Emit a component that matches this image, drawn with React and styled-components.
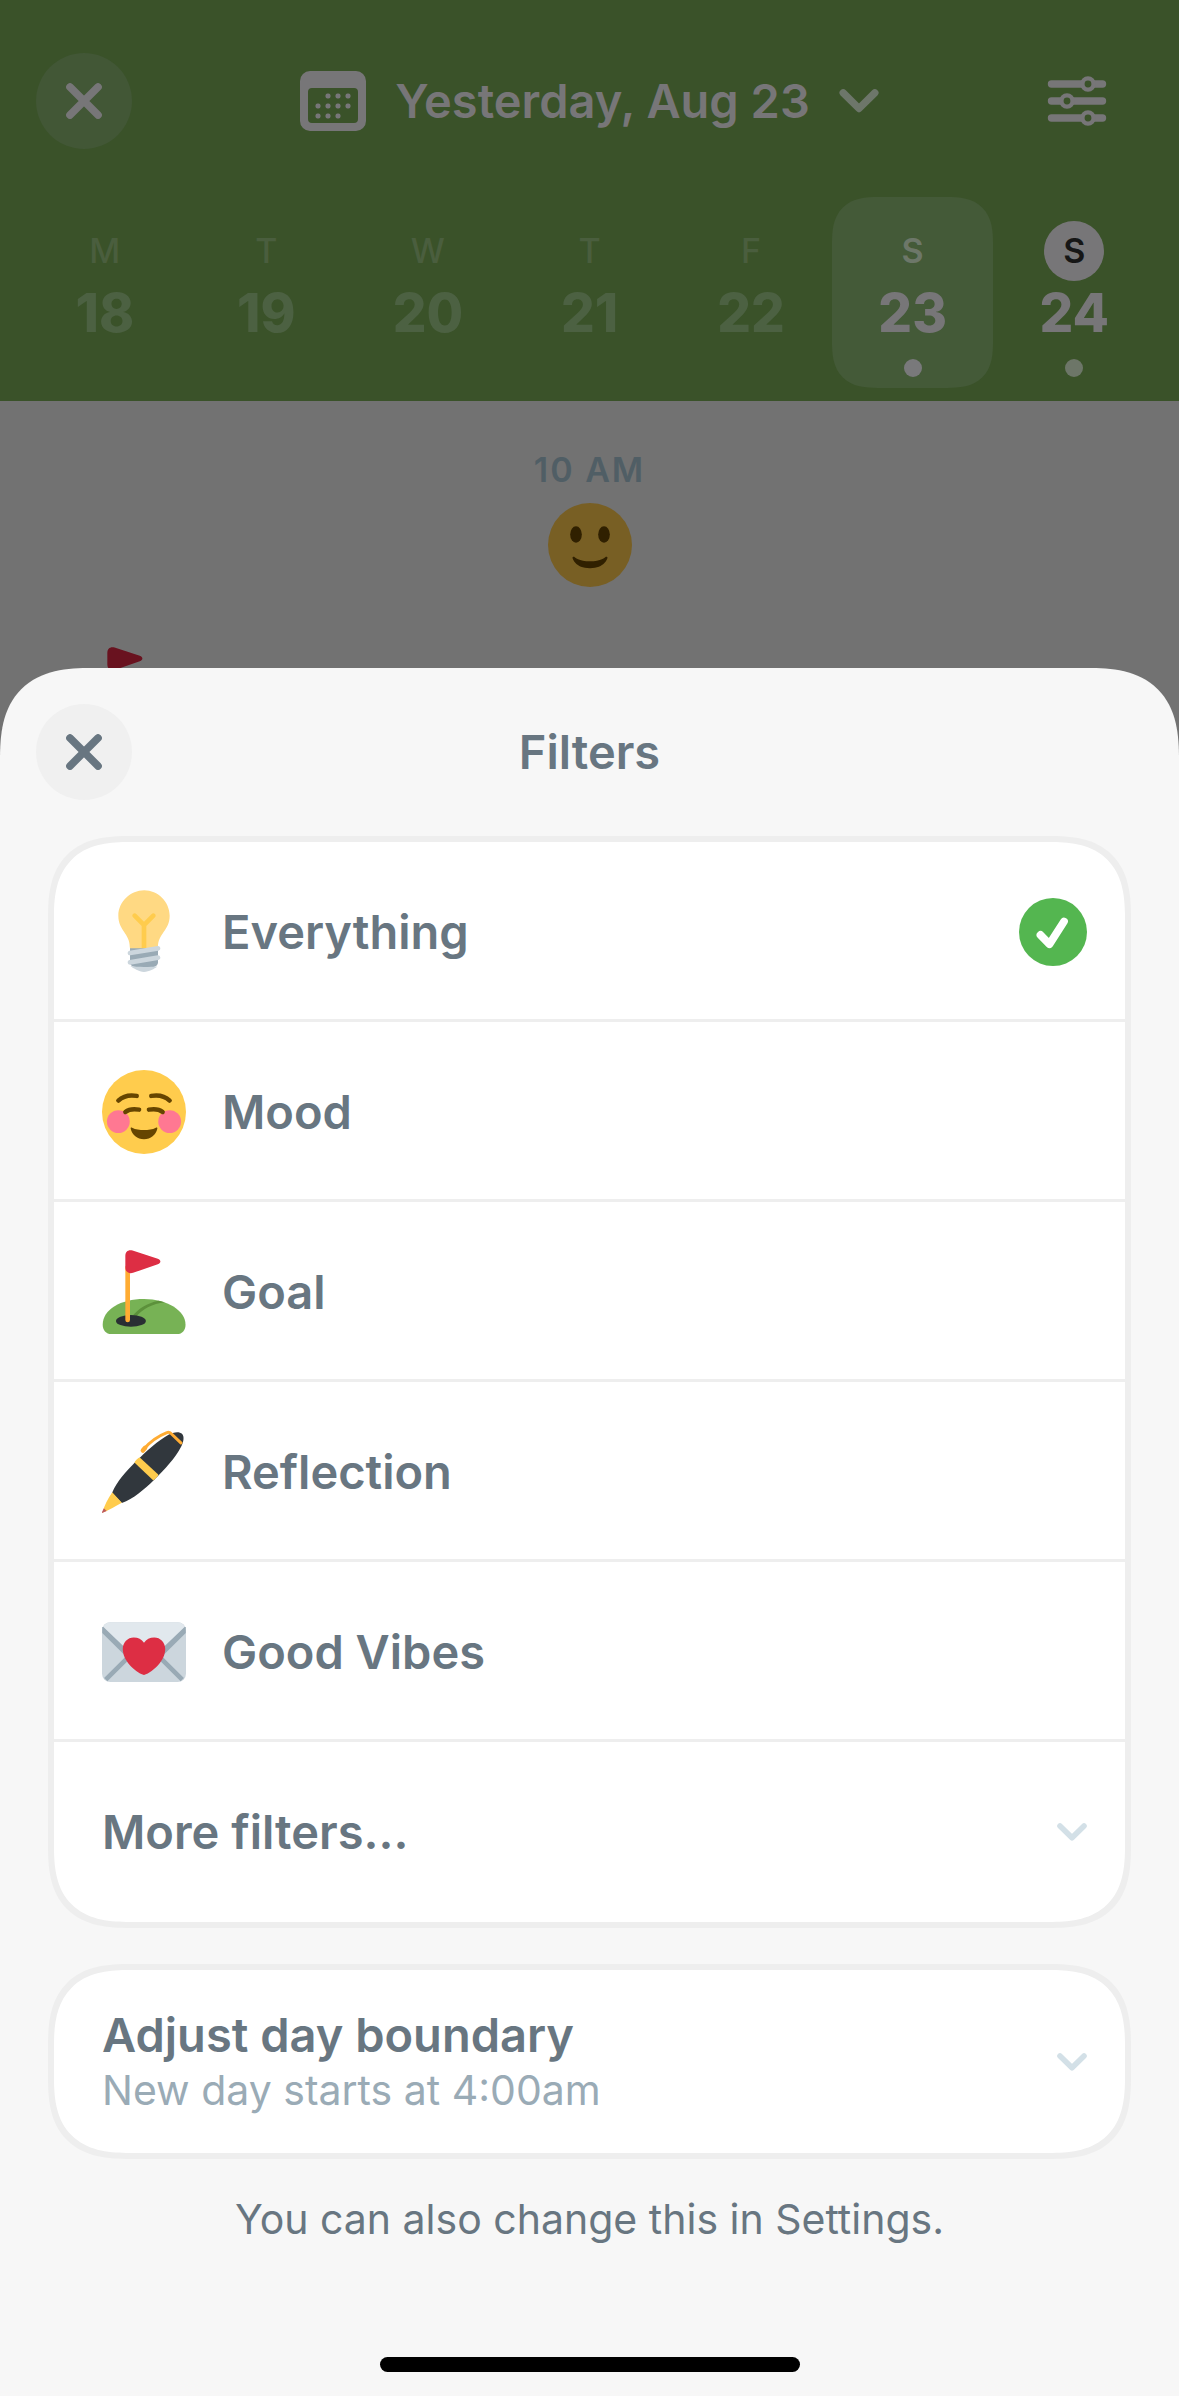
import React, { useState } from 'react';
import styled, { createGlobalStyle } from 'styled-components';

const color = {
  green: '#3a5229',
  greenRaised: '#445a38',
  veil: '#727272',
  headerText: '#777678',
  ink: '#687681',
  muted: '#9aabb6',
  line: '#eeeeee',
  sheet: '#f7f7f7',
  accent: '#54b650',
  chevron: '#d3e0e7',
};

const GlobalStyle = createGlobalStyle`
  * { box-sizing: border-box; }
  body {
    margin: 0;
    background: ${color.veil};
    font-family: Inter, Roboto, "Liberation Sans", sans-serif;
    color: ${color.ink};
  }
  button {
    margin: 0;
    padding: 0;
    border: 0;
    background: none;
    font: inherit;
    color: inherit;
    cursor: pointer;
  }
  svg { display: block; flex: none; }
`;

const Screen = styled.div`
  display: flex;
  flex-direction: column;
  min-height: 100vh;
`;

/* Day header */

const DayHeader = styled.header`
  padding: 53px 0 13px;
  background: ${color.green};
  color: ${color.headerText};
`;

const TitleBar = styled.div`
  display: grid;
  grid-template-columns: 1fr auto 1fr;
  align-items: center;
  padding: 0 36px;
`;

const RoundButton = styled.button`
  display: grid;
  place-items: center;
  width: 96px;
  height: 96px;
  border-radius: 50%;
  background: ${(p) => (p.$dimmed ? '#425736' : '#f0f0f0')};
`;

const DateButton = styled.button`
  display: flex;
  align-items: center;
  gap: 29px;
  font-size: 47px;
  line-height: 58px;
  font-weight: 600;
`;

const ToolButton = styled.button`
  justify-self: end;
  margin-right: 36px;
`;

const Week = styled.nav`
  display: grid;
  grid-template-columns: repeat(7, 1fr);
  margin-top: 48px;
  padding: 0 24px;
`;

const DayCell = styled.button`
  display: flex;
  flex-direction: column;
  align-items: center;
  height: 191px;
  padding-top: 24px;
  border-radius: 36px;
  background: ${(p) => (p.$selected ? color.greenRaised : 'transparent')};
  color: ${(p) => (p.$active ? color.headerText : '#4c6142')};

  @supports (corner-shape: squircle) {
    border-radius: 46px;
    corner-shape: superellipse(1.4);
  }
`;

const Weekday = styled.span`
  width: 60px;
  border-radius: 50%;
  background: ${(p) => (p.$today ? color.headerText : 'transparent')};
  color: ${(p) => (p.$today ? '#161616' : p.$selected ? '#6d7769' : '#4a5e3e')};
  font-size: 34px;
  line-height: 60px;
  font-weight: ${(p) => (p.$today || p.$selected ? 600 : 500)};
`;

const DayNumber = styled.span`
  font-size: 53px;
  line-height: 64px;
  font-weight: 800;
`;

const EntryDot = styled.span`
  width: 18px;
  height: 18px;
  margin-top: 14px;
  border-radius: 50%;
  background: ${(p) => (p.$selected ? '#79797b' : '#6d7668')};
`;

/* Timeline behind the sheet */

const Timeline = styled.main`
  height: 267px;
  overflow: hidden;
`;

const TimeGroup = styled.section`
  display: flex;
  flex-direction: column;
  align-items: center;
  gap: 12px;
  padding-top: 48px;
`;

const TimeLabel = styled.h2`
  margin: 0;
  font-size: 34px;
  line-height: 42px;
  font-weight: 600;
  letter-spacing: 2px;
  color: #505e65;
`;

const TimelineEntry = styled.div`
  padding: 60px 84px 0;
`;

/* Filter sheet */

const Sheet = styled.section`
  display: flex;
  flex: 1;
  flex-direction: column;
  padding: 36px 0 24px;
  border-radius: 76px 76px 0 0;
  background: ${color.sheet};

  @supports (corner-shape: squircle) {
    border-radius: 92px 92px 0 0;
    corner-shape: superellipse(1.4);
  }
`;

const SheetHeader = styled.div`
  display: grid;
  grid-template-columns: 1fr auto 1fr;
  align-items: center;
  padding: 0 36px;
`;

const SheetTitle = styled.h1`
  margin: 0;
  font-size: 47px;
  line-height: 58px;
  font-weight: 600;
`;

const Card = styled.div`
  margin: 36px 48px 0;
  border: 6px solid ${color.line};
  border-radius: 66px;
  background: #fff;
  overflow: hidden;

  @supports (corner-shape: squircle) {
    border-radius: 82px;
    corner-shape: superellipse(1.4);
  }
`;

const rowLayout = `
  display: flex;
  align-items: center;
  gap: 36px;
  width: 100%;
  padding: 0 38px 0 48px;
  text-align: left;
`;

const FilterRow = styled.label`
  ${rowLayout}
  height: 180px;
  box-shadow: inset 0 -3px ${color.line};
  cursor: pointer;
`;

const DisclosureRow = styled.button`
  ${rowLayout}
  min-height: ${(p) => (p.$compact ? '183px' : '180px')};
`;

const RowText = styled.span`
  flex: 1;
`;

const RowTitle = styled.span`
  display: block;
  font-size: 47px;
  line-height: 56px;
  font-weight: 600;
`;

const RowNote = styled.span`
  display: block;
  font-size: 41px;
  line-height: 54px;
  color: ${color.muted};
`;

const Choice = styled.span`
  display: grid;
  width: 68px;
  height: 68px;

  > * { grid-area: 1 / 1; }
  > svg { visibility: hidden; pointer-events: none; }
  > input:checked + svg { visibility: visible; }
`;

const Radio = styled.input`
  appearance: none;
  width: 68px;
  height: 68px;
  margin: 0;
  border-radius: 50%;
`;

const Hint = styled.p`
  margin: 36px 48px 0;
  font-size: 41px;
  line-height: 48px;
  text-align: center;
`;

const HomeIndicator = styled.div`
  width: 420px;
  height: 15px;
  margin: auto auto 0;
  border-radius: 8px;
  background: #000;
`;

/* Icons */

const CloseIcon = () => (
  <svg width="36" height="36" viewBox="0 0 36 36" fill="none" stroke="currentColor" strokeWidth="7.600" strokeLinecap="round" aria-hidden="true">
    <path d="M4 4l28 28M32 4L4 32" />
  </svg>
);

const CalendarIcon = () => (
  <svg width="66" height="60" viewBox="0 0 66 60" aria-hidden="true">
    <path
      fill="currentColor"
      fillRule="evenodd"
      d="M10 0h46a10 10 0 0 1 10 10v40a10 10 0 0 1-10 10H10A10 10 0 0 1 0 50V10A10 10 0 0 1 10 0zM12 17a4 4 0 0 0-4 4v27a4 4 0 0 0 4 4h42a4 4 0 0 0 4-4V21a4 4 0 0 0-4-4z"
    />
    <g fill="currentColor">
      {[[28, 25], [38, 25], [48, 25], [18, 35], [28, 35], [38, 35], [48, 35], [18, 45], [28, 45], [38, 45]].map(([x, y]) => (
        <rect key={`${x}-${y}`} x={x - 2.5} y={y - 2.5} width="5" height="5" rx="2" />
      ))}
    </g>
  </svg>
);

const HeaderChevron = () => (
  <svg width="40" height="26" viewBox="0 0 40 26" fill="none" stroke="#6d766a" strokeWidth="7.400" strokeLinecap="round" strokeLinejoin="round" aria-hidden="true">
    <path d="M4.200 4.800L20 20.500 35.800 4.800" />
  </svg>
);

const RowChevron = () => (
  <svg width="30" height="18" viewBox="0 0 30 18" fill="none" stroke={color.chevron} strokeWidth="5.600" strokeLinecap="round" strokeLinejoin="round" aria-hidden="true">
    <path d="M3 3l12 11.800L27 3" />
  </svg>
);

const SlidersIcon = () => (
  <svg width="60" height="50" viewBox="0 0 60 50" aria-hidden="true">
    <g stroke="currentColor" strokeWidth="7.400" strokeLinecap="round">
      <path d="M4.500 8h51M4.500 25h51M4.500 42h51" />
    </g>
    <g fill={color.green} stroke="currentColor" strokeWidth="4.400">
      <circle cx="41" cy="8" r="5.600" />
      <circle cx="20" cy="25" r="5.600" />
      <circle cx="41" cy="42" r="5.600" />
    </g>
  </svg>
);

const CheckIcon = () => (
  <svg width="68" height="68" viewBox="0 0 68 68" fill="none" aria-hidden="true">
    <circle cx="34" cy="34" r="34" fill={color.accent} />
    <path d="M21.500 37l9 9.200L45 23.500" stroke="#fff" strokeWidth="7.800" strokeLinecap="round" strokeLinejoin="round" />
  </svg>
);

const Emoji = ({ children }) => (
  <svg width="84" height="84" viewBox="0 0 36 36" fill="none" aria-hidden="true">
    {children}
  </svg>
);

const SmileIcon = () => (
  <Emoji>
    <circle cx="18" cy="18" r="18" fill="#785f24" />
    <ellipse cx="12" cy="13.5" rx="2.5" ry="3.5" fill="#302000" />
    <ellipse cx="24" cy="13.5" rx="2.5" ry="3.5" fill="#302000" />
    <path
      fill="#302000"
      d="M10.515 23.621C10.56 23.8 11.683 28 18 28c6.318 0 7.44-4.2 7.485-4.379.055-.217-.043-.442-.237-.554-.195-.111-.439-.078-.6.077C24.629 23.163 22.694 25 18 25s-6.63-1.837-6.648-1.855C11.256 23.05 11.128 23 11 23c-.084 0-.169.021-.246.064-.196.112-.294.339-.239.557z"
    />
  </Emoji>
);

const BulbIcon = () => (
  <Emoji>
    <path fill="#FFD983" d="M29 11.06c0 6.439-5 7.439-5 13.44 0 3.098-3.123 3.359-5.5 3.359-2.053 0-6.586-.779-6.586-3.361C11.914 18.5 7 17.5 7 11.06 7 5.029 12.285.14 18.083.14 23.883.14 29 5.029 29 11.06z" />
    <path fill="#FFCC4D" d="M22.707 10.293c-.391-.391-1.023-.391-1.414 0L18 13.586l-3.293-3.293c-.391-.391-1.023-.391-1.414 0s-.391 1.023 0 1.414L17 15.414V26c0 .553.447 1 1 1s1-.447 1-1V15.414l3.707-3.707c.391-.391.391-1.023 0-1.414z" />
    <path fill="#99AAB5" d="M24 31c0 1.104-.896 2-2 2h-8c-1.104 0-2-.896-2-2v-6h12v6z" />
    <path fill="#CCD6DD" d="M12.2 32.6C13.5 33.6 15.8 35.1 18 35.1s4.5-1.3 5.7-2.3c-1.5.1-3.3.2-5.7.2s-4.3-.2-5.8-.4z" />
    <path fill="#CCD6DD" d="M11.999 32c-.48 0-.904-.347-.985-.836-.091-.544.277-1.06.822-1.15l12-2c.544-.098 1.06.277 1.15.822.091.544-.277 1.06-.822 1.15l-12 2c-.055.01-.111.014-.165.014zm0-4c-.48 0-.904-.347-.985-.836-.091-.544.277-1.06.822-1.15l12-2c.544-.097 1.06.277 1.15.822.091.544-.277 1.06-.822 1.15l-12 2c-.055.01-.111.014-.165.014z" />
  </Emoji>
);

const BlushIcon = () => (
  <Emoji>
    <circle cx="18" cy="18" r="18" fill="#FFCC4D" />
    <circle cx="7" cy="22.1" r="4.9" fill="#FF7892" />
    <circle cx="29" cy="22.1" r="4.9" fill="#FF7892" />
    <g stroke="#664500" strokeWidth="1.9" strokeLinecap="round">
      <path d="M7 13.1C9 11.2 12 10.6 14.9 11.1M29 13.1c-2-1.9-5-2.5-7.9-2" />
      <path d="M10 18c1.5-1.2 3.8-1.4 5.900-1M26 18c-1.5-1.2-3.8-1.4-5.900-1" />
    </g>
    <path fill="#664500" d="M12.9 24.7c1.5.8 3.3 1 5.1 1s3.6-.2 5.1-1c.4-.2.7 0 .6.5-.6 2.7-2.8 4.5-5.7 4.5s-5.1-1.8-5.7-4.5c-.1-.5.2-.7.6-.5z" />
  </Emoji>
);

const FLAG_PATH = 'M10 2.5C10 .6 11.3-.3 13.1.2l10.8 3.5c1.5.5 1.5 1.9 0 2.4L13.3 9.8C11.5 10.3 10 9.4 10 7.5z';

const GolfIcon = () => (
  <Emoji>
    <path fill="#77B255" d="M35.8 32c0 2.3-1.4 4-3.6 4H4c-2.3 0-3.7-1.700-3.7-4C.3 25.5 8 21 18 21s17.8 5 17.8 11z" />
    <path fill="#5C913B" d="M12.7 28.600c3.2-3.9 6.5-5.700 11.4-6.900l2.9.7c-5.600.7-9.3 2.7-12.4 6.2z" />
    <ellipse cx="12.4" cy="30.4" rx="6.4" ry="2.5" fill="#292F33" />
    <path fill="#FFAC33" d="M10 7h2v23a1 1 0 0 1-2 0z" />
    <path fill="#DD2E44" d={FLAG_PATH} />
  </Emoji>
);

const DimmedGolfIcon = () => (
  <Emoji>
    <path fill="#69121f" d={FLAG_PATH} />
  </Emoji>
);

const PenIcon = () => (
  <Emoji>
    <path fill="#31373D" d="M4.3 27C6.5 21.8 10 18.2 14.5 13.5 19 9 24 4.5 28.5 2c2-1.2 4.7-1.5 5.8-.4 1.1 1.2.7 3.4-.4 5.6-2.5 4.9-7 9.6-11.5 14.1C18 25.5 13.5 29.5 8.5 31.3z" />
    <path fill="#FFCC4D" d="M4.4 26.7l4.1 4.5C6 32.6 3 34.3.3 35.4.9 32.2 2.5 29.6 4.4 26.7z" />
    <path fill="#BE5B5B" d="M.8 33.5l1.2 1.2-1.7.8c-.3.1-.4-.1-.3-.4z" />
    <path fill="#FFCC4D" d="M16.2 11.800l7.900 7.300c.3.3-1.700 2.600-2.200 2.400L14 14c-.3-.3 1.800-2.5 2.2-2.2z" />
    <g stroke="#FFAC33" strokeLinecap="round" strokeLinejoin="round">
      <path strokeWidth="1.3" d="M17.7 8.4C20.5 5 24.5 2.4 27.8 1.1c.7-.3 1.300-.1 1.800.4l4.200 4" />
      <path strokeWidth="1.9" d="M17.500 8.800l1-1.200" />
    </g>
  </Emoji>
);

const LetterIcon = () => (
  <Emoji>
    <rect y="5.2" width="36" height="25.7" rx="3.6" fill="#CCD6DD" />
    <path d="M1.6 29.8L14 17.5M34.4 29.8L22 17.5" stroke="#99AAB5" strokeWidth="2" />
    <path fill="#99AAB5" d="M.1 7.300v2.600l14.200 14h7.400l14.200-14V7.300z" />
    <path fill="#CCD6DD" d="M11 20.600l3-3h8l3 3-3 7h-8z" />
    <path fill="#E1E8ED" d="M.5 7.200C1.100 6 2.200 5.200 3.600 5.200h28.800c1.400 0 2.500.8 3.100 2L20.500 21.500c-1.400 1.400-3.600 1.400-5 0z" />
    <path fill="#DD2E44" d="M27.100 16.700c0-2.800-2.100-4.900-4.700-4.900-1.900 0-3.400.8-4.400 2.200-1-1.400-2.500-2.200-4.400-2.200-2.600 0-4.700 2.100-4.700 4.900 0 4.700 4.700 9.600 9.100 11.200 4.400-1.600 9.100-6.500 9.100-11.200z" />
  </Emoji>
);

const DAYS = [
  { letter: 'M', number: 18 },
  { letter: 'T', number: 19 },
  { letter: 'W', number: 20 },
  { letter: 'T', number: 21 },
  { letter: 'F', number: 22 },
  { letter: 'S', number: 23, selected: true, hasEntries: true },
  { letter: 'S', number: 24, today: true, hasEntries: true },
];

const FILTERS = [
  { label: 'Everything', Icon: BulbIcon },
  { label: 'Mood', Icon: BlushIcon },
  { label: 'Goal', Icon: GolfIcon },
  { label: 'Reflection', Icon: PenIcon },
  { label: 'Good Vibes', Icon: LetterIcon },
];

export default function App() {
  const [filter, setFilter] = useState('Everything');

  return (
    <Screen>
      <GlobalStyle />
      <DayHeader>
        <TitleBar>
          <RoundButton $dimmed aria-label="Close">
            <CloseIcon />
          </RoundButton>
          <DateButton>
            <CalendarIcon />
            Yesterday, Aug 23
            <HeaderChevron />
          </DateButton>
          <ToolButton aria-label="Filters">
            <SlidersIcon />
          </ToolButton>
        </TitleBar>
        <Week>
          {DAYS.map((day) => (
            <DayCell key={day.number} $selected={day.selected} $active={day.hasEntries}>
              <Weekday $today={day.today} $selected={day.selected}>{day.letter}</Weekday>
              <DayNumber>{day.number}</DayNumber>
              {day.hasEntries && <EntryDot $selected={day.selected} />}
            </DayCell>
          ))}
        </Week>
      </DayHeader>

      <Timeline>
        <TimeGroup>
          <TimeLabel>10 AM</TimeLabel>
          <SmileIcon />
        </TimeGroup>
        <TimelineEntry>
          <DimmedGolfIcon />
        </TimelineEntry>
      </Timeline>

      <Sheet role="dialog" aria-labelledby="sheet-title">
        <SheetHeader>
          <RoundButton aria-label="Close filters">
            <CloseIcon />
          </RoundButton>
          <SheetTitle id="sheet-title">Filters</SheetTitle>
        </SheetHeader>

        <Card>
          {FILTERS.map(({ label, Icon }) => (
            <FilterRow key={label}>
              <Icon />
              <RowText>
                <RowTitle>{label}</RowTitle>
              </RowText>
              <Choice>
                <Radio
                  type="radio"
                  name="filter"
                  checked={filter === label}
                  onChange={() => setFilter(label)}
                />
                <CheckIcon />
              </Choice>
            </FilterRow>
          ))}
          <DisclosureRow aria-expanded="false">
            <RowText>
              <RowTitle>More filters...</RowTitle>
            </RowText>
            <RowChevron />
          </DisclosureRow>
        </Card>

        <Card>
          <DisclosureRow $compact aria-expanded="false">
            <RowText>
              <RowTitle>Adjust day boundary</RowTitle>
              <RowNote>New day starts at 4:00am</RowNote>
            </RowText>
            <RowChevron />
          </DisclosureRow>
        </Card>

        <Hint>You can also change this in Settings.</Hint>
        <HomeIndicator />
      </Sheet>
    </Screen>
  );
}
